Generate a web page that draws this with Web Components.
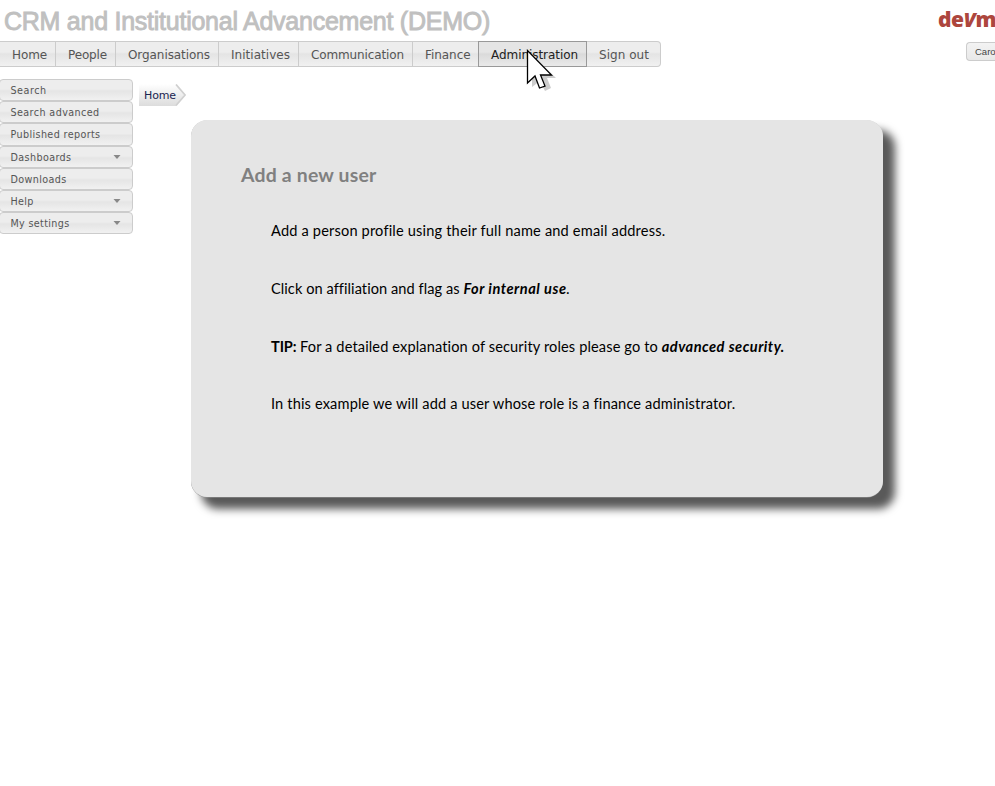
<!DOCTYPE html>
<html lang="en"><head><meta charset="utf-8"><title>CRM and Institutional Advancement</title>
<style>html,body{margin:0;width:995px;height:786px;overflow:hidden;background:#fff}</style></head>
<body><crm-page></crm-page>
<script>
// Single line of text whose tracking is adjusted to a given measure.
customElements.define('fit-text', class extends HTMLElement {
  connectedCallback() {
    const r = this.attachShadow({mode:'open'});
    r.innerHTML = '<style>:host{display:inline-block;white-space:pre;flex:none}</style><span><slot></slot></span>';
    const s = r.querySelector('span'), target = +this.getAttribute('measure');
    const n = this.textContent.length;
    if (target) { s.style.letterSpacing = (target - s.getBoundingClientRect().width) / n + 'px'; }
  }
});
customElements.define('nav-item', class extends HTMLElement {
  connectedCallback() {
    this.attachShadow({mode:'open'}).innerHTML = `<style>
    :host{box-sizing:border-box;display:flex;height:26px;width:var(--w);padding-left:12px;border:1px solid #ccc;border-left:0;
      font:12px/26px "DejaVu Sans",sans-serif;color:#555;background:linear-gradient(#ededed 0 42%,#e4e4e4 50%,#f1f1f1 100%)}
    :host([last]){border-radius:0 4px 4px 0}
    :host([active]){border-color:#999;box-shadow:-1px 0 #999;color:#222;background:linear-gradient(#e5e5e5 0 42%,#dadada 50%,#eaeaea 100%)}
    </style><slot></slot>`;
  }
});
customElements.define('side-item', class extends HTMLElement {
  connectedCallback() {
    this.attachShadow({mode:'open'}).innerHTML = `<style>
    :host{box-sizing:border-box;display:flex;justify-content:space-between;height:22.2px;width:134px;margin-left:-1px;padding:0 11px 0 10.5px;border:1px solid #ccc;border-radius:4px;
      font:9.6px/21px "DejaVu Sans",sans-serif;color:#555;background:linear-gradient(#ededed 0 45%,#e5e5e5 55%,#f1f1f1)}
    svg{display:none;margin-top:7px}:host([menu]) svg{display:block}
    </style><slot></slot><svg width="8" height="6"><path d="M.5 1H7.5L4 5Z" fill="#888"/></svg>`;
  }
});
customElements.define('crumb-tab', class extends HTMLElement {
  connectedCallback() {
    this.attachShadow({mode:'open'}).innerHTML = `<style>
    :host{display:grid;width:48px;height:23px;font:11px/23px "DejaVu Sans",sans-serif;color:#1b2550}
    svg,div{grid-area:1/1}div{padding-left:5px}
    </style><svg width="48" height="23"><defs><linearGradient id="g" x2="0" y2="1"><stop stop-color="#fff"/><stop offset="1" stop-color="#dcdcdc"/></linearGradient></defs>
    <path d="M0 0H37L45 11L37 22H0Z" fill="url(#g)"/><path d="M37 .5L46 11L37 21.5" fill="none" stroke="#d0d0d0" stroke-width="1.8"/></svg><div><slot></slot></div>`;
  }
});
customElements.define('info-card', class extends HTMLElement {
  connectedCallback() {
    this.attachShadow({mode:'open'}).innerHTML = `<style>
    :host{box-sizing:border-box;display:block;width:691.5px;height:377px;padding:42px 50px;border-radius:16px;background:#e5e5e5;
      box-shadow:0 .5px .5px #999,11px 11px 8px 1px #595959;font:14.6px/20px Lato,sans-serif;color:#000}
    h2{margin:0;font:700 19.4px/26px Lato,sans-serif;color:#808080}
    .body{padding:33.4px 0 0 30px;display:grid;row-gap:37.7px}
    </style><h2><slot name="title"></slot></h2><div class="body"><slot></slot></div>`;
  }
});
customElements.define('mouse-pointer', class extends HTMLElement {
  connectedCallback() {
    this.attachShadow({mode:'open'}).innerHTML = `<style>:host{position:absolute;left:526px;top:49px}svg{display:block}</style>
    <svg width="34" height="44"><path d="M6 6L30 29H21L25 39L19 42L14 32L6 38Z" fill="#999" opacity=".5"/>
    <path d="M1.5 1.5V34L9 27L13.5 39L19 37L14.5 26H25.5Z" fill="#fff" stroke="#000" stroke-width="1.3"/></svg>`;
  }
});
customElements.define('crm-page', class extends HTMLElement {
  connectedCallback() {
    this.attachShadow({mode:'open'}).innerHTML = `<style>
    :host{display:block;position:relative;width:995px;height:786px;overflow:hidden}
    header{display:flex;justify-content:space-between;height:41px}
    h1{margin:4.5px 0 0 4px;font:25px/32px "Liberation Sans",Arial,sans-serif;color:#c0c0c0;-webkit-text-stroke:.9px #c0c0c0}
    .logo{width:57px;overflow:hidden;white-space:nowrap;font:800 21px/26px "Open Sans",sans-serif;color:#ad463d;padding-top:6px}
    .logo i{font-size:20px}
    .bar{display:flex;justify-content:space-between}nav{display:flex}
    .user{box-sizing:border-box;width:29px;height:19px;margin-top:1px;padding-left:8px;border:1px solid #ccc;border-right:0;border-radius:4px 0 0 4px;background:linear-gradient(#f3f3f3,#e8e8e8);font:9.5px/18px "Liberation Sans",sans-serif;color:#444;overflow:hidden}
    main{display:flex;padding-top:12px}
    aside{width:139px}.content{padding-top:5px}
    info-card{margin:13px 0 0 52px}
    p{margin:0;display:flex;white-space:pre}
    </style>
    <header><h1><fit-text measure="486">CRM and Institutional Advancement (DEMO)</fit-text></h1><div class="logo"><fit-text measure="58">de<i>V</i>m</fit-text></div></header>
    <div class="bar"><nav>
    <nav-item style="--w:56px"><fit-text measure="35">Home</fit-text></nav-item>
    <nav-item style="--w:60px"><fit-text measure="39">People</fit-text></nav-item>
    <nav-item style="--w:103px"><fit-text measure="82">Organisations</fit-text></nav-item>
    <nav-item style="--w:80px"><fit-text measure="59">Initiatives</fit-text></nav-item>
    <nav-item style="--w:114px"><fit-text measure="93">Communication</fit-text></nav-item>
    <nav-item style="--w:66px"><fit-text measure="45.5">Finance</fit-text></nav-item>
    <nav-item active style="--w:108px"><fit-text measure="87">Administration</fit-text></nav-item>
    <nav-item last style="--w:74px"><fit-text measure="50">Sign out</fit-text></nav-item>
    </nav><div class="user">Caro</div></div>
    <main><aside>
    <side-item><fit-text measure="36">Search</fit-text></side-item>
    <side-item><fit-text measure="89">Search advanced</fit-text></side-item>
    <side-item><fit-text measure="90">Published reports</fit-text></side-item>
    <side-item menu><fit-text measure="61">Dashboards</fit-text></side-item>
    <side-item><fit-text measure="56">Downloads</fit-text></side-item>
    <side-item menu><fit-text measure="23">Help</fit-text></side-item>
    <side-item menu><fit-text measure="59">My settings</fit-text></side-item>
    </aside><div class="content"><crumb-tab><fit-text measure="32">Home</fit-text></crumb-tab>
    <info-card><fit-text slot="title" measure="135.5">Add a new user</fit-text>
    <p><fit-text measure="394">Add a person profile using their full name and email address.</fit-text></p>
    <p><fit-text measure="192">Click on affiliation and flag as </fit-text><fit-text measure="107"><b><i>For internal use</i></b><i>.</i></fit-text></p>
    <p><fit-text measure="29"><b>TIP:</b> </fit-text><fit-text measure="362">For a detailed explanation of security roles please go to </fit-text><fit-text measure="123"><b><i>advanced security.</i></b></fit-text></p>
    <p><fit-text measure="464">In this example we will add a user whose role is a finance administrator.</fit-text></p>
    </info-card></div></main><mouse-pointer></mouse-pointer>`;
  }
});
</script></body></html>
